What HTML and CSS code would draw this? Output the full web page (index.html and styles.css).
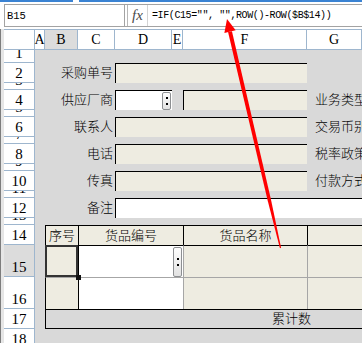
FILE: index.html
```html
<!DOCTYPE html>
<html lang="zh-CN">
<head>
<meta charset="utf-8">
<title>采购单</title>
<link rel="stylesheet" href="styles.css">
</head>
<body>
<div class="tabs"><span class="tab tab1"></span><span class="tab tab2"></span></div>
<div class="fbar">
  <div class="namebox">B15</div>
  <div class="grip"></div>
  <div class="fx">fx</div>
  <div class="formula">=IF(C15="", "",ROW()-ROW($B$14))</div>
</div>
<div class="sheetwrap">
<div class="sheet">
  <div class="corner"></div>
  <div class="ch">A</div>
  <div class="ch sel">B</div>
  <div class="ch">C</div>
  <div class="ch">D</div>
  <div class="ch">E</div>
  <div class="ch">F</div>
  <div class="ch">G</div>

  <div class="rh">1</div>
  <div class="rh">2</div>
  <div class="rh">3</div>
  <div class="rh">4</div>
  <div class="rh">5</div>
  <div class="rh">6</div>
  <div class="rh">7</div>
  <div class="rh">8</div>
  <div class="rh">9</div>
  <div class="rh">10</div>
  <div class="rh">11</div>
  <div class="rh">12</div>
  <div class="rh">13</div>
  <div class="rh">14</div>
  <div class="rh sel">15</div>
  <div class="rh">16</div>
  <div class="rh">17</div>
  <div class="rh">18</div>

  <div class="lbl y3">采购单号</div>
  <div class="field y3"></div>

  <div class="lbl y5">供应厂商</div>
  <div class="field sup y5"><span class="dd"></span></div>
  <div class="field fcol y5"></div>
  <div class="gl y5">业务类型</div>

  <div class="lbl y7">联系人</div>
  <div class="field y7"></div>
  <div class="gl y7">交易币别</div>

  <div class="lbl y9">电话</div>
  <div class="field y9"></div>
  <div class="gl y9">税率政策</div>

  <div class="lbl y11">传真</div>
  <div class="field y11"></div>
  <div class="gl y11">付款方式</div>

  <div class="lbl y13">备注</div>
  <div class="field memo y13"></div>

  <div class="th cB y15">序号</div>
  <div class="th cCE y15">货品编号</div>
  <div class="th cF y15">货品名称</div>
  <div class="th cG y15"></div>

  <div class="td first cB dark y16 active"></div>
  <div class="td first cCE dark code y16"><span class="dd"></span></div>
  <div class="td first cF y16"></div>
  <div class="td first cG y16"></div>

  <div class="td cB dark y17"></div>
  <div class="td cCE dark code y17"></div>
  <div class="td cF y17"></div>
  <div class="td cG y17"></div>

  <div class="total y18">累计数</div>
</div>
</div>

<svg class="arrow" width="362" height="343" viewBox="0 0 362 343" aria-hidden="true">
  <polygon points="228.05,32.05 231.95,31.15 270.95,199.61 281.08,247.86 279.92,248.14 267.65,200.39" fill="#ff0000"/>
  <polygon points="227,19 235.66,30.3 224.38,33" fill="#ff0000"/>
</svg>
</body>
</html>
```

FILE: styles.css
```css
* {
  box-sizing: border-box;
  margin: 0;
  padding: 0;
}

html, body {
  width: 362px;
  height: 343px;
  overflow: hidden;
  background: #ffffff;
}

body {
  position: relative;
  font-family: "Noto Sans CJK SC", "Noto Sans", sans-serif;
  font-size: 13px;
  font-weight: 300;
  color: #000;
}

/* ribbon remnants at the very top */
.tabs {
  display: flex;
  gap: 6px;
  height: 2px;
}
.tab { background: #3b83d3; }
.tab1 { width: 73px; }
.tab2 { flex: 1; }

/* formula bar */
.fbar {
  display: flex;
  height: 23px;
  margin: 2px 0 0 4px;
  border-top: 1px solid #a3a3a3;
  border-bottom: 1px solid #a3a3a3;
}
.namebox {
  width: 121px;
  border-left: 1px solid #a3a3a3;
  border-right: 1px solid #a3a3a3;
  display: flex;
  align-items: center;
  padding-left: 2px;
  font: 10.5px "Liberation Mono", monospace;
}
.grip {
  width: 2px;
}
.fx {
  width: 21px;
  border-left: 1px solid #b8b8b8;
  border-right: 1px solid #d4d4d4;
  display: flex;
  align-items: center;
  justify-content: center;
  font: italic 15px "Liberation Serif", serif;
  color: #4a4a4a;
}
.formula {
  flex: 1;
  display: flex;
  align-items: center;
  padding-left: 4px;
  white-space: nowrap;
  font: 10px "Liberation Mono", monospace;
  letter-spacing: -0.4px;
}

/* sheet */
.sheetwrap {
  margin-top: 2px;
  border-left: 1px solid #7d7d7d;
  padding-left: 3px;
  background: #e6e6e6;
}
.sheet {
  display: grid;
  grid-template-columns: 31px 10px 33px 37px 57px 11px 124px 55px;
  grid-template-rows: 21px 13px 20px 7px 20px 7px 20px 7px 20px 7px 20px 7px 20px 7px 20px 32px 32px 20px 20px;
  background: #d9d9d9;
}

.corner, .ch {
  background: #fff;
  border-top: 1px solid #9eb6ce;
  border-bottom: 1px solid #9eb6ce;
  border-right: 1px solid #9eb6ce;
}
.ch {
  display: flex;
  align-items: center;
  justify-content: center;
  font: 14px "Liberation Serif", serif;
}
.ch.sel { background: #dcdcdc; }

.rh {
  grid-column: 1;
  background: #fff;
  border-bottom: 1px solid #9eb6ce;
  border-right: 1px solid #9eb6ce;
  display: flex;
  align-items: flex-end;
  justify-content: center;
  overflow: hidden;
  padding-bottom: 1px;
  font: 15px/15px "Liberation Serif", serif;
}
.rh.sel { background: #dcdcdc; }

/* row placement */
.y3 { grid-row: 3; }
.y5 { grid-row: 5; }
.y7 { grid-row: 7; }
.y9 { grid-row: 9; }
.y11 { grid-row: 11; }
.y13 { grid-row: 13; }
.y15 { grid-row: 15; }
.y16 { grid-row: 16; }
.y17 { grid-row: 17; }
.y18 { grid-row: 18; }

/* form header */
.lbl {
  grid-column: 3 / 5;
  display: flex;
  align-items: flex-end;
  justify-content: flex-end;
  padding: 0 2px 3px 0;
  line-height: 16px;
  white-space: nowrap;
}
.field {
  grid-column: 5 / 8;
  background: #eeece1;
  border-top: 1px solid #000;
  border-left: 1px solid #000;
}
.field.sup {
  grid-column: 5 / 6;
  background: #fff;
  display: flex;
  justify-content: flex-end;
  padding: 1px 1px 0 0;
}
.field.fcol { grid-column: 7 / 8; }
.field.memo {
  grid-column: 5 / 9;
  background: #fff;
}
.gl {
  grid-column: 8;
  display: flex;
  align-items: flex-end;
  padding: 0 0 3px 8px;
  line-height: 16px;
  white-space: nowrap;
}

/* dropdown button */
.dd {
  width: 9px;
  border: 1px solid #8d8f92;
  border-radius: 2px;
  background: linear-gradient(#fdfdfd, #e2e2e2);
  display: flex;
  flex-direction: column;
  align-items: center;
  justify-content: center;
  gap: 4px;
}
.dd::before, .dd::after {
  content: "";
  width: 2px;
  height: 2px;
  background: #000;
}

/* detail table */
.cB { grid-column: 3; }
.cCE { grid-column: 4 / 7; }
.cF { grid-column: 7; }
.cG { grid-column: 8; }

.th {
  background: #eeece1;
  border-top: 1px solid #000;
  border-left: 1px solid #000;
  display: flex;
  align-items: flex-end;
  justify-content: center;
  padding-bottom: 2px;
  line-height: 16px;
  white-space: nowrap;
}
.td {
  background: #eeece1;
  border-top: 1px solid #a6a6a6;
  border-left: 1px solid #a6a6a6;
}
.td.first { border-top-color: #000; }
.td.dark { border-left-color: #000; }
.td.code {
  background: #fff;
  display: flex;
  justify-content: flex-end;
  padding: 1px 1px 0 0;
}

.active { position: relative; }
.active::after {
  content: "";
  position: absolute;
  left: -1px;
  top: -1px;
  right: 0;
  bottom: 0;
  border: 2px solid #333;
}
.active::before {
  content: "";
  position: absolute;
  right: -3px;
  bottom: -3px;
  width: 5px;
  height: 5px;
  background: #111;
  z-index: 1;
}

.total {
  grid-column: 3 / 9;
  border-top: 1px solid #000;
  border-left: 1px solid #000;
  border-bottom: 1px solid #000;
  display: flex;
  align-items: flex-end;
  padding: 0 0 2px 226px;
  line-height: 16px;
  white-space: nowrap;
}

/* annotation overlay */
.arrow {
  position: absolute;
  left: 0;
  top: 0;
  pointer-events: none;
}
```
